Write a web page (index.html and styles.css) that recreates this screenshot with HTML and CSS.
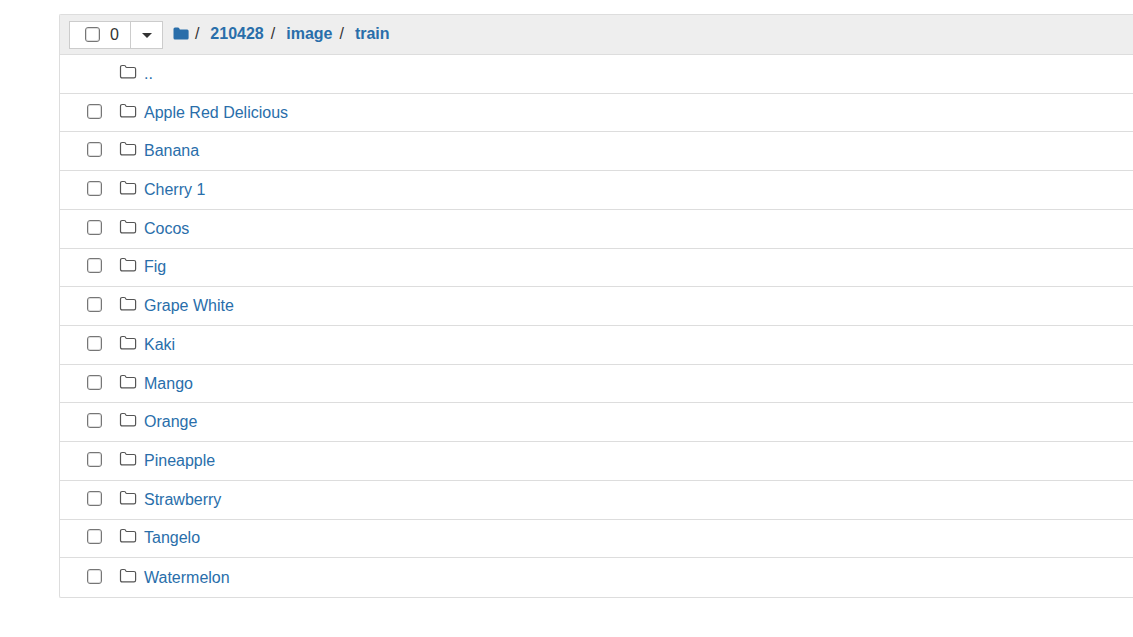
FILE: index.html
```html
<!DOCTYPE html>
<html lang="en">
<head>
<meta charset="utf-8">
<title>train</title>
<link rel="stylesheet" href="styles.css">
</head>
<body>
<svg class="defs" aria-hidden="true">
  <symbol id="folder" viewBox="0 0 18 16"><path d="M1.5 12.2V3.2Q1.5 1.5 3.2 1.5H5.2Q6.6 1.5 6.8 2.8Q7 3.5 7.8 3.5H15Q16.6 3.5 16.6 5.1V12.2Q16.6 13.9 15 13.9H3.2Q1.5 13.9 1.5 12.2Z" fill="none" stroke="#555" stroke-width="1.2"/></symbol>
</svg>
<main class="panel">
  <header class="toolbar">
    <div class="select-group">
      <label class="select-all"><input class="check" type="checkbox" aria-label="Select all"><span>0</span></label>
      <button class="caret-button" type="button" aria-label="Selection menu"><span class="caret"></span></button>
    </div>
    <nav class="crumbs" aria-label="Breadcrumb">
      <a class="home" href="#" aria-label="Home"><svg width="16" height="14" viewBox="0 0 16 14"><path d="M.5 2Q.5 .5 2 .5H5Q6.4 .5 6.6 2Q6.7 2.5 7.3 2.5H14.2Q15.6 2.5 15.6 4V11Q15.6 12.5 14.2 12.5H2Q.5 12.5 .5 11Z" fill="#296eaa"/></svg></a>
      <span class="slash">/</span><a class="crumb" href="#">210428</a>
      <span class="slash">/</span><a class="crumb" href="#">image</a>
      <span class="slash">/</span><a class="crumb" href="#">train</a>
    </nav>
  </header>
  <ul class="list">
    <li class="row"><span class="cell"></span><svg class="icon"><use href="#folder"/></svg><a class="name" href="#">..</a></li>
    <li class="row"><span class="cell"><input class="check" type="checkbox" aria-label="Select Apple Red Delicious"></span><svg class="icon"><use href="#folder"/></svg><a class="name" href="#">Apple Red Delicious</a></li>
    <li class="row"><span class="cell"><input class="check" type="checkbox" aria-label="Select Banana"></span><svg class="icon"><use href="#folder"/></svg><a class="name" href="#">Banana</a></li>
    <li class="row"><span class="cell"><input class="check" type="checkbox" aria-label="Select Cherry 1"></span><svg class="icon"><use href="#folder"/></svg><a class="name" href="#">Cherry 1</a></li>
    <li class="row"><span class="cell"><input class="check" type="checkbox" aria-label="Select Cocos"></span><svg class="icon"><use href="#folder"/></svg><a class="name" href="#">Cocos</a></li>
    <li class="row"><span class="cell"><input class="check" type="checkbox" aria-label="Select Fig"></span><svg class="icon"><use href="#folder"/></svg><a class="name" href="#">Fig</a></li>
    <li class="row"><span class="cell"><input class="check" type="checkbox" aria-label="Select Grape White"></span><svg class="icon"><use href="#folder"/></svg><a class="name" href="#">Grape White</a></li>
    <li class="row"><span class="cell"><input class="check" type="checkbox" aria-label="Select Kaki"></span><svg class="icon"><use href="#folder"/></svg><a class="name" href="#">Kaki</a></li>
    <li class="row"><span class="cell"><input class="check" type="checkbox" aria-label="Select Mango"></span><svg class="icon"><use href="#folder"/></svg><a class="name" href="#">Mango</a></li>
    <li class="row"><span class="cell"><input class="check" type="checkbox" aria-label="Select Orange"></span><svg class="icon"><use href="#folder"/></svg><a class="name" href="#">Orange</a></li>
    <li class="row"><span class="cell"><input class="check" type="checkbox" aria-label="Select Pineapple"></span><svg class="icon"><use href="#folder"/></svg><a class="name" href="#">Pineapple</a></li>
    <li class="row"><span class="cell"><input class="check" type="checkbox" aria-label="Select Strawberry"></span><svg class="icon"><use href="#folder"/></svg><a class="name" href="#">Strawberry</a></li>
    <li class="row"><span class="cell"><input class="check" type="checkbox" aria-label="Select Tangelo"></span><svg class="icon"><use href="#folder"/></svg><a class="name" href="#">Tangelo</a></li>
    <li class="row"><span class="cell"><input class="check" type="checkbox" aria-label="Select Watermelon"></span><svg class="icon"><use href="#folder"/></svg><a class="name" href="#">Watermelon</a></li>
  </ul>
</main>
</body>
</html>
```
FILE: styles.css
```css
* { box-sizing: border-box; }

body {
  margin: 0;
  padding: 14px 0 0 59px;
  background: #fff;
  color: #333;
  font: 16px/20px "Liberation Sans", Arial, sans-serif;
}

.defs { display: none; }

a { color: #296eaa; text-decoration: none; }
a:hover { text-decoration: underline; }

.panel {
  border: 1px solid #ddd;
  border-right: 0;
  border-radius: 2px 0 0 2px;
}

.toolbar {
  display: flex;
  align-items: flex-start;
  gap: 10px;
  padding: 6px 9px 5px;
  background: #eee;
  border-bottom: 1px solid #ddd;
}

.select-group {
  display: flex;
  height: 28px;
  border: 1px solid #ccc;
  background: #fff;
}

.select-all {
  display: flex;
  align-items: center;
  gap: 10px;
  padding: 0 11px 1px 15px;
}

.check {
  appearance: none;
  width: 15px;
  height: 15px;
  margin: 0;
  border: 1px solid #767676;
  border-radius: 3px;
  background: #fff;
  box-shadow: inset 0 0 0 1px #ddd;
}
.check:checked { background: #296eaa; }

.caret-button {
  display: flex;
  align-items: center;
  justify-content: center;
  width: 32px;
  padding: 0 0 0 1px;
  border: 0;
  border-left: 1px solid #ccc;
  background: #fff;
}

.caret {
  border: 5px solid transparent;
  border-top-color: #333;
  border-bottom: 0;
}

.crumbs {
  display: flex;
  padding-top: 3px;
}

.home { display: flex; align-items: center; padding-bottom: 1px; }
.slash { padding: 0 11px 0 6px; }
.crumb { padding-right: 1px; font-weight: bold; }

.list {
  display: grid;
  grid-auto-rows: 1fr;
  min-height: 542px;
  margin: 0;
  padding: 0;
  list-style: none;
}

.row {
  display: flex;
  align-items: center;
  padding-left: 27px;
  border-bottom: 1px solid #ddd;
}
.row:last-child { border-bottom: 0; }

.cell { display: flex; width: 32px; padding-bottom: 3px; }
.icon { width: 18px; height: 20px; padding-bottom: 4px; }
.name { padding-left: 7px; }
```
